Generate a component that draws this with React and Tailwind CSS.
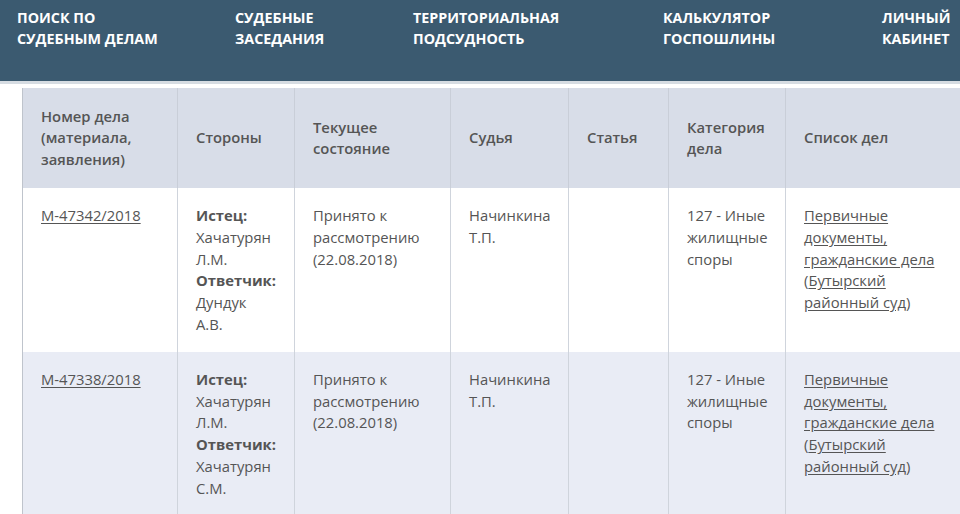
const navItems = [
  { lines: ["Поиск по", "судебным делам"], w: "w-[218px]" },
  { lines: ["Судебные", "заседания"], w: "w-[178px]" },
  { lines: ["Территориальная", "подсудность"], w: "w-[250px]" },
  { lines: ["Калькулятор", "госпошлины"], w: "w-[219px]" },
  { lines: ["Личный", "кабинет"], w: "" },
];

const columns = [
  { title: ["Номер дела", "(материала,", "заявления)"], w: "w-[155px]" },
  { title: ["Стороны"], w: "w-[117px]" },
  { title: ["Текущее", "состояние"], w: "w-[156px]" },
  { title: ["Судья"], w: "w-[118px]" },
  { title: ["Статья"], w: "w-[100px]" },
  { title: ["Категория", "дела"], w: "w-[117px]" },
  { title: ["Список дел"], w: "" },
];

const cases = [
  { number: "М-47342/2018", plaintiff: ["Хачатурян", "Л.М."], defendant: ["Дундук", "А.В."] },
  { number: "М-47338/2018", plaintiff: ["Хачатурян", "Л.М."], defendant: ["Хачатурян", "С.М."] },
];

const Lines = ({ lines }) =>
  lines.map((l, i) => (
    <span key={i} className="block">
      {l}
    </span>
  ));

const Cell = ({ children, first }) => (
  <td className={`border-l px-[18px] pt-[17px] pb-[16px] align-top ${first ? "border-[#bfc4cc]" : "border-[#cfd4dc]"}`}>
    {children}
  </td>
);

export default function App() {
  return (
    <div className="h-[514px] w-[960px] overflow-hidden bg-white font-['Open_Sans',sans-serif] text-[14.8px] leading-[21.8px] text-[#555]">
      <header className="box-content h-[81px] border-b-[3px] border-[#d6dce2] bg-[#3b5a70]">
        <nav className="flex pl-[17px] pt-[7px] text-[14.3px] font-bold uppercase leading-[21px] text-white">
          {navItems.map((n, i) => (
            <div key={i} className={n.w}>
              <Lines lines={n.lines} />
            </div>
          ))}
        </nav>
      </header>

      <div className="pl-[22px] pt-[4px]">
        <table className="w-[960px] table-fixed border-collapse">
          <thead>
            <tr className="h-[100px] bg-[#d8dde8]">
              {columns.map((c, i) => (
                <th
                  key={i}
                  className={`${c.w} border-l px-[18px] text-left align-middle font-semibold leading-[21.5px] ${
                    i === 0 ? "border-[#bfc4cc]" : "border-[#c9ced8]"
                  }`}
                >
                  <Lines lines={c.title} />
                </th>
              ))}
            </tr>
          </thead>
          <tbody>
            {cases.map((c, i) => (
              <tr key={c.number} className={i % 2 ? "bg-[#e9ecf5]" : "bg-white"}>
                <Cell first>
                  <a href="#" className="underline underline-offset-2">
                    {c.number}
                  </a>
                </Cell>
                <Cell>
                  <span className="block font-bold">Истец:</span>
                  <Lines lines={c.plaintiff} />
                  <span className="block font-bold">Ответчик:</span>
                  <Lines lines={c.defendant} />
                </Cell>
                <Cell>
                  <Lines lines={["Принято к", "рассмотрению", "(22.08.2018)"]} />
                </Cell>
                <Cell>
                  <Lines lines={["Начинкина", "Т.П."]} />
                </Cell>
                <Cell />
                <Cell>
                  <Lines lines={["127 - Иные", "жилищные", "споры"]} />
                </Cell>
                <Cell>
                  <a href="#" className="block underline underline-offset-2">Первичные</a>
                  <a href="#" className="block underline underline-offset-2">документы,</a>
                  <a href="#" className="block underline underline-offset-2">гражданские дела</a>
                  <span className="block">
                    (<a href="#" className="underline underline-offset-2">Бутырский</a>
                  </span>
                  <span className="block">
                    <a href="#" className="underline underline-offset-2">районный суд</a>)
                  </span>
                </Cell>
              </tr>
            ))}
          </tbody>
        </table>
      </div>
    </div>
  );
}
